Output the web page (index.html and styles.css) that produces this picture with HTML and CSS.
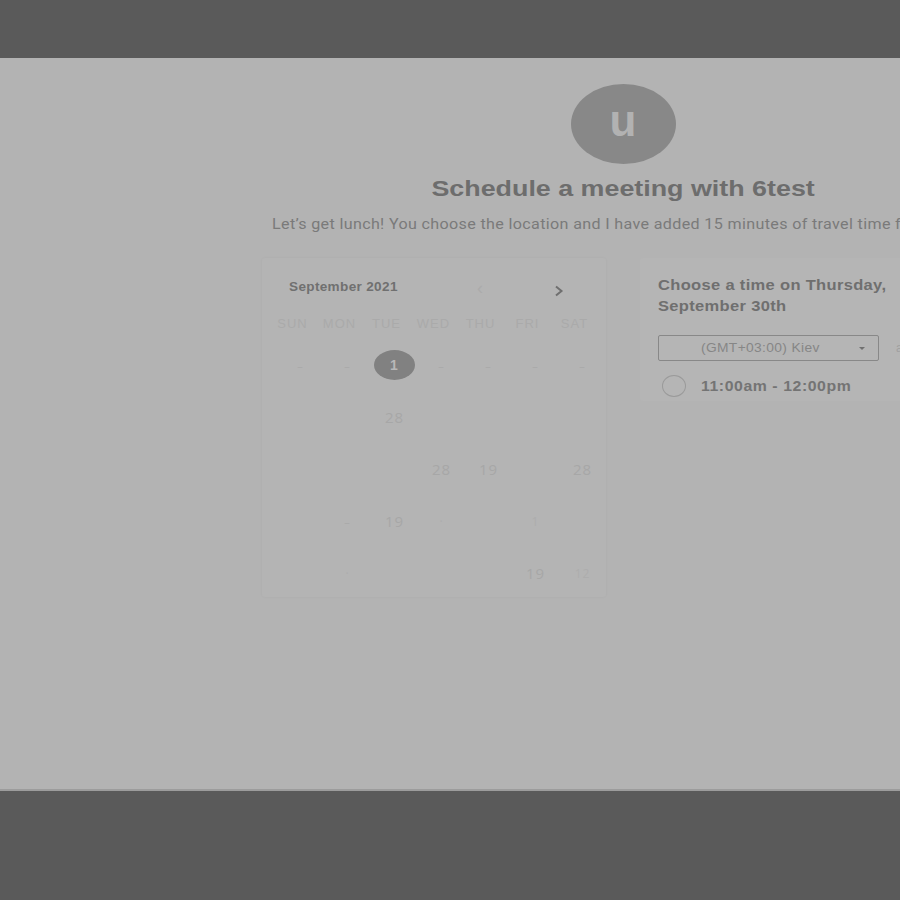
FILE: index.html
```html
<!DOCTYPE html>
<html>
<head>
<meta charset="utf-8">
<link rel="stylesheet" href="styles.css">
</head>
<body>
<div class="topbar"></div>
<div class="main">
  <div class="wrap">
    <header class="head">
      <div class="avatar">u</div>
      <h1 class="title">Schedule a meeting with 6test</h1>
      <p class="sub">Let’s get lunch! You choose the location and I have added 15 minutes of travel time for us.</p>
    </header>
    <div class="cols">
      <section class="cal">
        <div class="cal-top">
          <span class="month">September 2021</span>
          <span class="nav prev">&lsaquo;</span>
          <span class="nav next">
            <svg width="10" height="12" viewBox="0 0 10 12"><path d="M2 1.5 L7.5 6 L2 10.5" fill="none" stroke="#6f6f6f" stroke-width="2"/></svg>
          </span>
        </div>
        <div class="wk">
          <span>SUN</span><span>MON</span><span>TUE</span><span>WED</span><span>THU</span><span>FRI</span><span>SAT</span>
        </div>
        <div class="days">
          <span class="d dash">–</span><span class="d dash">–</span><span class="d sel"><b>1</b></span><span class="d dash">–</span><span class="d dash">–</span><span class="d dash">–</span><span class="d dash">–</span>
          <span class="d"></span><span class="d"></span><span class="d n">28</span><span class="d"></span><span class="d"></span><span class="d"></span><span class="d"></span>
          <span class="d"></span><span class="d"></span><span class="d"></span><span class="d n">28</span><span class="d n">19</span><span class="d"></span><span class="d n">28</span>
          <span class="d"></span><span class="d dash">–</span><span class="d n">19</span><span class="d faint">·</span><span class="d"></span><span class="d faint">1</span><span class="d"></span>
          <span class="d"></span><span class="d faint">·</span><span class="d"></span><span class="d"></span><span class="d"></span><span class="d n">19</span><span class="d faint">12</span>
        </div>
      </section>
      <section class="times">
        <h2 class="choose"><span class="l">Choose a time on Thursday,</span><span class="l">September 30th</span></h2>
        <div class="tzrow">
          <div class="select">
            <span class="tz">(GMT+03:00) Kiev</span>
            <span class="caret"></span>
          </div>
          <span class="after">al</span>
        </div>
        <label class="slot">
          <span class="radio"></span>
          <span class="slot-text">11:00am - 12:00pm</span>
        </label>
      </section>
    </div>
  </div>
</div>
<div class="bottom"></div>
</body>
</html>
```

FILE: styles.css
```css
html, body {
  margin: 0;
  padding: 0;
  background: #5a5a5a;
  overflow: hidden;
  width: 900px;
  height: 900px;
}
body {
  font-family: "Liberation Sans", Arial, sans-serif;
}
.topbar {
  height: 58px;
  background: #5a5a5a;
}
.main {
  height: 731px;
  background: #b3b3b3;
  border-bottom: 2px solid #9c9c9c;
  overflow: hidden;
}
.wrap {
  width: 722px;
  margin-left: 262px;
}
.head {
  display: flex;
  flex-direction: column;
  align-items: center;
}
.avatar {
  margin-top: 26px;
  width: 105px;
  height: 80px;
  border-radius: 50%;
  background: #888888;
  color: #b2b2b2;
  font-family: "Liberation Sans", Arial, sans-serif;
  font-size: 44px;
  font-weight: bold;
  line-height: 74px;
  text-align: center;
}
.title {
  margin: 12px 0 0;
  font-size: 22px;
  line-height: 26px;
  font-weight: bold;
  color: #6d6d6d;
  transform: scaleX(1.22);
}
.sub {
  margin: 13px 0 0;
  align-self: flex-start;
  padding-left: 10px;
  white-space: nowrap;
  font-family: Roboto, "Liberation Sans", sans-serif;
  font-size: 14px;
  line-height: 18px;
  color: #7a7a7a;
  letter-spacing: 0.3px;
  transform: scaleX(1.15);
  transform-origin: 10px 0;
}
.cols {
  display: flex;
  gap: 34px;
  margin-top: 25px;
}
.cal {
  width: 344px;
  height: 339px;
  box-sizing: border-box;
  background: #b4b4b4;
  box-shadow: 0 0 3px rgba(0,0,0,0.04);
  border-radius: 3px;
}
.cal-top {
  display: flex;
  align-items: center;
  height: 20px;
  padding: 19px 0 0 27px;
}
.month {
  font-size: 12px;
  font-weight: bold;
  color: #707070;
  letter-spacing: 0.3px;
  width: 188px;
  transform: scaleX(1.13);
  transform-origin: 0 0;
}
.nav {
  font-size: 18px;
  color: #ababab;
}
.prev {
  width: 77px;
  margin-top: 3px;
}
.next {
  display: flex;
  margin-top: 7px;
}
.wk {
  display: grid;
  grid-template-columns: repeat(7, 47px);
  margin: 19px 0 0 7px;
  height: 16px;
  font-size: 13px;
  line-height: 16px;
  color: #aaaaaa;
  letter-spacing: 1px;
  text-align: center;
}
.days {
  display: grid;
  grid-template-columns: repeat(7, 47px);
  grid-auto-rows: 52px;
  margin: 7px 0 0 15px;
  font-family: "Open Sans", "Liberation Sans", sans-serif;
  font-size: 15px;
  color: #a7a7a7;
  letter-spacing: 1px;
  text-align: center;
}
.d {
  display: flex;
  align-items: center;
  justify-content: center;
}
.dash {
  color: #a9a9a9;
  font-size: 11px;
}
.faint {
  color: #adadad;
  font-size: 12px;
}
.sel b {
  width: 41px;
  height: 30px;
  border-radius: 50%;
  background: #818181;
  color: #b8b8b8;
  font-family: "Liberation Sans", Arial, sans-serif;
  font-size: 14px;
  font-weight: bold;
  display: flex;
  align-items: center;
  justify-content: center;
}
.times {
  flex: 1;
  height: 143px;
  background: #b5b5b5;
  border-radius: 3px 0 0 3px;
  padding: 16px 0 0 18px;
  box-sizing: border-box;
}
.choose {
  margin: 0;
  font-size: 15px;
  line-height: 21px;
  font-weight: bold;
  color: #6f6f6f;
  letter-spacing: 0.3px;
}
.choose .l {
  display: block;
  white-space: nowrap;
  transform: scaleX(1.1);
  transform-origin: 0 0;
}
.tzrow {
  display: flex;
  align-items: center;
  margin-top: 19px;
  gap: 17px;
}
.select {
  width: 221px;
  height: 26px;
  flex: none;
  box-sizing: border-box;
  border: 1px solid #888888;
  border-radius: 2px;
  display: flex;
  align-items: center;
  position: relative;
}
.tz {
  margin-left: 42px;
  font-size: 12px;
  color: #868686;
  letter-spacing: 0.3px;
  transform: scaleX(1.15);
  transform-origin: 0 0;
}
.caret {
  position: absolute;
  right: 13px;
  top: 11px;
  width: 0;
  height: 0;
  border-left: 3px solid transparent;
  border-right: 3px solid transparent;
  border-top: 3px solid #707070;
}
.after {
  font-size: 12px;
  color: #a0a0a0;
}
.slot {
  display: flex;
  align-items: center;
  margin-top: 14px;
  margin-left: 4px;
}
.radio {
  width: 22px;
  height: 20px;
  border: 1px solid #9a9a9a;
  border-radius: 50%;
}
.slot-text {
  margin-left: 15px;
  font-size: 14px;
  font-weight: bold;
  color: #747474;
  letter-spacing: 0.5px;
  transform: scaleX(1.13);
  transform-origin: 0 0;
}
.bottom {
  height: 109px;
  background: #5a5a5a;
}
```
